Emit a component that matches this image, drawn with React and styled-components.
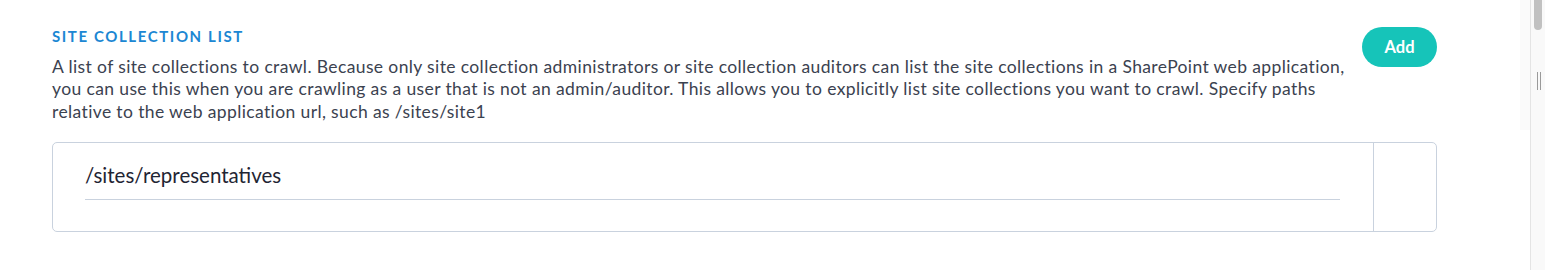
import React, { useState } from 'react';
import styled, { createGlobalStyle } from 'styled-components';

const GlobalStyle = createGlobalStyle`
  html, body {
    margin: 0;
    padding: 0;
    background: #ffffff;
    font-family: Lato, "Open Sans", sans-serif;
  }
`;

const Page = styled.div`
  display: flex;
  width: 1545px;
  height: 270px;
  overflow: hidden;
`;

const Main = styled.main`
  flex: 1;
  padding: 27px 83px 0 52px;
`;

const Header = styled.div`
  display: flex;
  align-items: flex-start;
  gap: 12px;
`;

const Intro = styled.div`
  flex: 1;
  padding-top: 1px;
`;

const Title = styled.h3`
  margin: 0;
  font-size: 15px;
  line-height: 16px;
  font-weight: 700;
  letter-spacing: 1.6px;
  text-transform: uppercase;
  color: #1c87d3;
`;

const Description = styled.p`
  margin: 12px 0 0;
  font-size: 17.5px;
  line-height: 22.4px;
  letter-spacing: 0.38px;
  color: #3b4250;
`;

const AddButton = styled.button`
  flex: none;
  width: 75px;
  height: 40px;
  border: none;
  border-radius: 20px;
  background: #16c4b9;
  color: #ffffff;
  font-family: inherit;
  font-size: 16.5px;
  font-weight: 700;
  cursor: pointer;
`;

const ListCard = styled.div`
  display: flex;
  margin-top: 19px;
  border: 1px solid #c9d2de;
  border-radius: 5px;
`;

const ValueCell = styled.div`
  flex: 1;
  padding: 14px 33px 31px 32px;
`;

const ActionCell = styled.div`
  flex: none;
  width: 62px;
  border-left: 1px solid #c9d2de;
`;

const PathInput = styled.input`
  display: block;
  box-sizing: border-box;
  width: 100%;
  padding: 6px 0 12px;
  border: none;
  border-bottom: 1px solid #c9d2de;
  outline: none;
  background: transparent;
  font-family: inherit;
  font-size: 20.5px;
  line-height: 24px;
  color: #1f2533;
`;

const SidePanel = styled.div`
  flex: none;
  width: 10px;
  height: 130px;
  background: #fafafa;
`;

const ScrollTrack = styled.div`
  position: relative;
  flex: none;
  width: 14px;
  border-left: 1px solid #e4e4e4;
  background: #f9f9f9;
`;

const ScrollThumb = styled.div`
  position: absolute;
  top: 0;
  left: 3px;
  width: 8px;
  height: 30px;
  border-radius: 0 0 4px 4px;
  background: #c1c1c1;
`;

const Grip = styled.div`
  position: absolute;
  top: 72px;
  left: 6px;
  width: 1px;
  height: 18px;
  background: #9a9a9a;
  box-shadow: 3px 0 0 #9a9a9a;
`;

export default function App() {
  const [paths, setPaths] = useState(['/sites/representatives']);

  return (
    <Page>
      <GlobalStyle />
      <Main>
        <Header>
          <Intro>
            <Title>Site Collection List</Title>
            <Description>
              A list of site collections to crawl. Because only site collection administrators or site
              collection auditors can list the site collections in a SharePoint web application, you can
              use this when you are crawling as a user that is not an admin/auditor. This allows you to
              explicitly list site collections you want to crawl. Specify paths relative to the web
              application url, such as /sites/site1
            </Description>
          </Intro>
          <AddButton onClick={() => setPaths([...paths, ''])}>Add</AddButton>
        </Header>
        {paths.map((path, i) => (
          <ListCard key={i}>
            <ValueCell>
              <PathInput
                value={path}
                onChange={(e) => setPaths(paths.map((p, j) => (j === i ? e.target.value : p)))}
              />
            </ValueCell>
            <ActionCell />
          </ListCard>
        ))}
      </Main>
      <SidePanel />
      <ScrollTrack>
        <ScrollThumb />
        <Grip />
      </ScrollTrack>
    </Page>
  );
}
